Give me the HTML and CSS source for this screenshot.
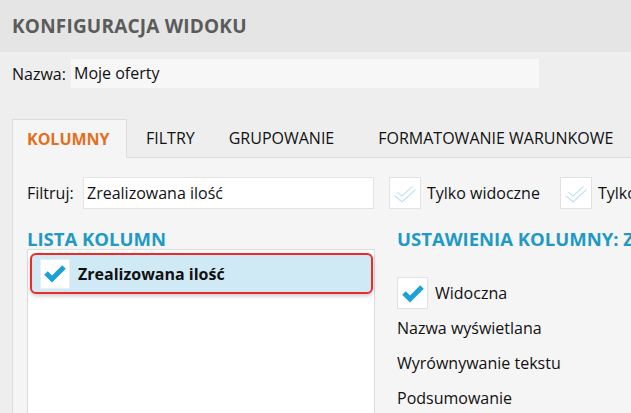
FILE: index.html
```html
<!DOCTYPE html>
<html lang="pl">
<head>
<meta charset="utf-8">
<link rel="stylesheet" href="styles.css">
</head>
<body>
<div class="page">
  <header class="header"><h1 class="title">KONFIGURACJA WIDOKU</h1></header>
  <div class="name-row">
    <span class="name-label">Nazwa:</span>
    <div class="name-input">Moje oferty</div>
  </div>
  <div class="tabs">
    <div class="tab active">KOLUMNY</div>
    <div class="tab t-filtry">FILTRY</div>
    <div class="tab t-grup">GRUPOWANIE</div>
    <div class="tab t-form">FORMATOWANIE WARUNKOWE</div>
  </div>
  <div class="panel">
    <div class="filter-row">
      <span class="filter-label">Filtruj:</span>
      <div class="filter-input">Zrealizowana ilość</div>
      <div class="cb cb-empty"><svg width="30" height="30" viewBox="0 0 30 30"><polyline points="6,16 12,21 24,10" fill="none" stroke="#bfe3f1" stroke-width="5.5" stroke-linejoin="miter"/><polyline points="6,16 12,21 24,10" fill="none" stroke="#fff" stroke-width="3.2" stroke-linejoin="miter"/></svg></div>
      <span class="cb-text">Tylko widoczne</span>
      <div class="cb cb-empty cb2"><svg width="30" height="30" viewBox="0 0 30 30"><polyline points="6,16 12,21 24,10" fill="none" stroke="#bfe3f1" stroke-width="5.5" stroke-linejoin="miter"/><polyline points="6,16 12,21 24,10" fill="none" stroke="#fff" stroke-width="3.2" stroke-linejoin="miter"/></svg></div>
      <span class="cb-text">Tylko</span>
    </div>
    <div class="columns">
      <div class="col-left">
        <h2 class="section">LISTA KOLUMN</h2>
        <div class="list">
          <div class="item">
            <div class="cb cb-item"><svg width="28" height="28" viewBox="0 0 28 28"><polyline points="5,13 11,19 23,7" fill="none" stroke="#1ba1d8" stroke-width="5"/></svg></div>
            <span class="item-text">Zrealizowana ilość</span>
          </div>
        </div>
      </div>
      <div class="col-right">
        <h2 class="section">USTAWIENIA KOLUMNY: Zrealizowana ilość</h2>
        <div class="vis-row">
          <div class="cb cb-vis"><svg width="29" height="30" viewBox="0 0 29 30"><polyline points="6,15 12,21 24,9" fill="none" stroke="#1ba1d8" stroke-width="5"/></svg></div>
          <span class="vis-text">Widoczna</span>
        </div>
        <div class="prop">Nazwa wyświetlana</div>
        <div class="prop">Wyrównywanie tekstu</div>
        <div class="prop">Podsumowanie</div>
      </div>
    </div>
  </div>
</div>
</body>
</html>
```
FILE: styles.css
```css
* { box-sizing: border-box; }
html, body { margin: 0; padding: 0; }
body {
  background: #eeeeee;
  font-family: "Open Sans", "Noto Sans", sans-serif;
  font-size: 16px;
  color: #111;
  width: 631px;
  height: 413px;
  overflow: hidden;
}
.page { width: 631px; height: 413px; overflow: hidden; }
.header {
  height: 52px;
  background: #e5e5e5;
  padding-left: 12px;
  display: flex;
  align-items: center;
}
.title {
  margin: 0;
  font-size: 19px;
  font-weight: 700;
  color: #5b5b5b;
  letter-spacing: 0.2px;
}
.name-row {
  margin-top: 7px;
  height: 29px;
  display: flex;
  align-items: center;
  padding-left: 12px;
}
.name-label { width: 59px; }
.name-input {
  width: 468px;
  height: 29px;
  background: #f7f7f7;
  padding-left: 3px;
  line-height: 29px;
}
.tabs {
  margin-top: 31px;
  margin-left: 12px;
  display: flex;
  height: 38px;
  white-space: nowrap;
}
.tab {
  line-height: 38px;
  font-size: 16px;
  color: #111;
}
.tab.active {
  width: 115px;
  padding-left: 14px;
  font-weight: 700;
  color: #e46f1c;
  background: #f5f5f5;
  border: 1px solid #dcdcdc;
  border-bottom: none;
  position: relative;
  z-index: 1;
  height: 39px;
}
.t-filtry { margin-left: 19px; }
.t-grup { margin-left: 34px; }
.t-form { margin-left: 44px; }
.panel {
  margin-left: 12px;
  background: #f5f5f5;
  border-top: 1px solid #dcdcdc;
  border-left: 1px solid #dcdcdc;
  height: 256px;
  padding: 19px 0 0 14px;
  overflow: hidden;
}
.filter-row {
  display: flex;
  align-items: center;
  height: 32px;
  white-space: nowrap;
}
.filter-label { width: 56px; flex: none; }
.filter-input {
  flex: none;
  width: 291px;
  height: 32px;
  background: #fff;
  border: 1px solid #e4e4e4;
  line-height: 30px;
  padding-left: 3px;
}
.cb {
  background: #fff;
  border: 1px solid #e2e2e2;
  flex: none;
  display: flex;
}
.cb-empty { width: 32px; height: 32px; margin-left: 15px; }
.cb2 { margin-left: 20px; }
.cb-text { margin-left: 6px; }
.columns { display: flex; margin-top: 20px; }
.col-left { width: 348px; flex: none; }
.section {
  margin: 0;
  font-size: 18.5px;
  font-weight: 700;
  color: #1d9ac6;
  line-height: 20px;
  white-space: nowrap;
}
.list {
  background: #fff;
  border: 1px solid #dcdcdc;
  height: 170px;
  padding: 3px 1px 0 2px;
}
.item {
  height: 41px;
  background: #cfeaf5;
  border: 2px solid #ec2a2a;
  border-radius: 6px;
  box-shadow: 0 2px 4px rgba(0,0,0,0.2);
  display: flex;
  align-items: center;
  padding-left: 8px;
}
.cb-item { width: 30px; height: 30px; border-color: #eee; }
.item-text { margin-left: 8px; font-weight: 700; font-size: 16px; }
.col-right { margin-left: 22px; min-width: 0; flex: none; }
.vis-row { display: flex; align-items: center; margin-top: 28px; }
.cb-vis { width: 31px; height: 32px; }
.vis-text { margin-left: 7px; }
.prop { margin-top: 9px; height: 26px; line-height: 26px; }
.vis-row + .prop { margin-top: 6px; }
```
